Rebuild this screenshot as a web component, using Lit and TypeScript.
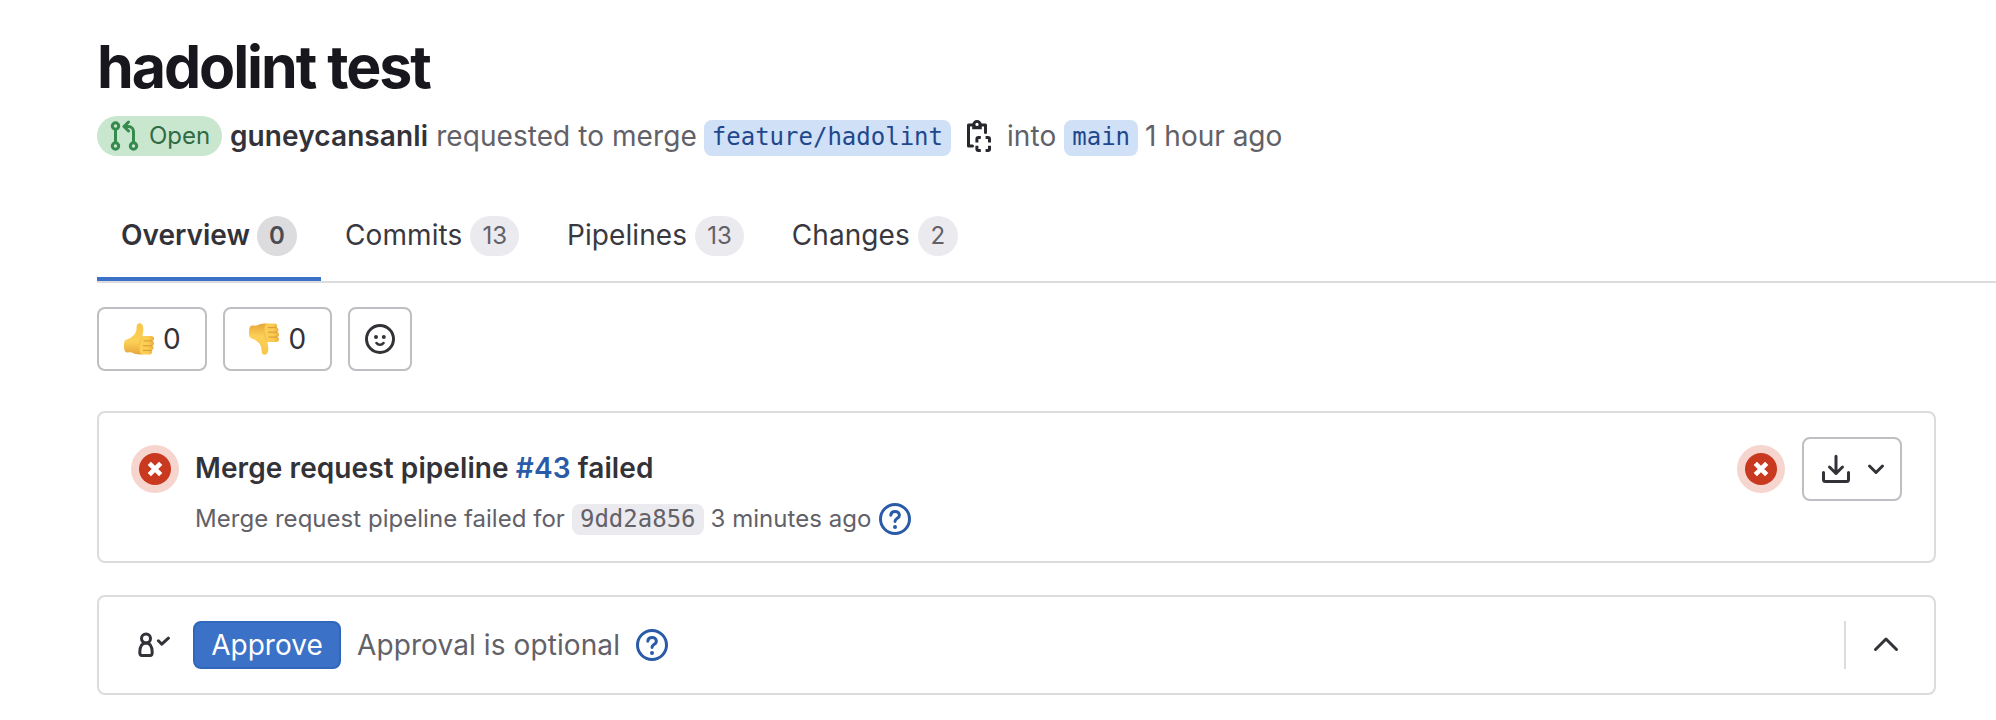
import { LitElement, html, css, svg } from "lit";
import { customElement, property } from "lit/decorators.js";

const thumb = svg`
  <path d="M.4 18.500C1 16.700 4.500 16.300 7.300 14.300 10.500 12 12 9.800 12.500 6.200 12.700 3.300 12.600.3 15.200.2c3-.1 4.200 2.800 4.100 6.200-.1 2.500-.7 4.600-.8 6.600l5 4-1 13.500c-3.500 1.200-8.500 1.100-12 .3-1.500-.4-2.500-1.500-4-1.500-2 0-4 .6-5.300-.8C-.2 26.500-.3 21.500.4 18.500z" fill="url(#skin)"/>
  <path d="M19 12.900h8c3.800 0 3.800 4.200 1.300 5 2.500.6 2.300 4.300 0 4.900 1.900.8 1.500 4.100-.7 4.600 1.300 1.300.4 4-1.900 4h-6.500c-2.400 0-3.700-2-3.700-4.800 0-4.500.8-10 3.500-13.700z" fill="url(#fist)"/>
  <path d="M20 17.900h8M19.300 22.800h8.500M19.300 27.400h7.700" stroke="#d29434" stroke-width=".9" fill="none" stroke-linecap="round"/>
  <path d="M17.800 14.700c-1.300 1.700-2.100 4.200-2.300 7.500" stroke="#efb344" stroke-width=".7" fill="none"/>`;

const icons: Record<string, unknown> = {
  merge: svg`<g fill="none" stroke="currentColor" stroke-width="1.500"><circle cx="3.250" cy="3" r="1.600"/><circle cx="3.250" cy="13" r="1.600"/><circle cx="12.250" cy="13" r="1.600"/><path d="M3.250 4.500v7M12.250 11.500V5.750a2.500 2.500 0 0 0-2.500-2.500H8"/><path d="M9.750 1 7.500 3.250l2.250 2.250" stroke-linecap="round" stroke-linejoin="round"/></g>`,
  copy: svg`<g fill="none" stroke="currentColor" stroke-width="1.500"><path d="M4.750 13H2.750V2.500h8.500v3.700" stroke-linecap="round" stroke-linejoin="round"/><path d="M6.950 11.200V9.500q0-.75.75-.75h1.200M11.300 8.750h1.200q.75 0 .75.75v1.700M13.250 12.900v1.600q0 .75-.75.75h-1.200M8.900 15.250H7.700q-.75 0-.75-.75v-1.600"/></g><path d="M4.600 4.600V2.400a2.400 2.400 0 0 1 4.800 0v2.200z" fill="currentColor"/><circle cx="7" cy="2.200" r=".8" fill="#fff"/>`,
  smile: svg`<circle cx="8" cy="8" r="6.750" fill="none" stroke="currentColor" stroke-width="1.500"/><circle cx="6" cy="7" r="1" fill="currentColor"/><circle cx="9.900" cy="7" r="1" fill="currentColor"/><path d="M6.250 10c.9 1.200 2.600 1.200 3.500 0" fill="none" stroke="currentColor" stroke-width="1.300" stroke-linecap="round"/>`,
  download: svg`<path d="M8 1.600v8.700M4.750 7 8 10.250 11.250 7M1.750 9.750v3.500q0 1 1 1h10.500q1 0 1-1v-3.500" fill="none" stroke="currentColor" stroke-width="1.500" stroke-linecap="round" stroke-linejoin="round"/>`,
  down: svg`<path d="M4.750 6.500 8 9.750 11.250 6.500" fill="none" stroke="currentColor" stroke-width="1.500" stroke-linecap="round" stroke-linejoin="round"/>`,
  up: svg`<path d="M2.750 10.250 8 5l5.250 5.250" fill="none" stroke="currentColor" stroke-width="1.500" stroke-linecap="round" stroke-linejoin="round"/>`,
  help: svg`<circle cx="8" cy="8" r="7.250" fill="none" stroke="currentColor" stroke-width="1.500"/><path d="M5.900 6.100c.2-2.500 4.300-2.400 4.300 0 0 1.600-2.100 1.500-2.200 3.100" fill="none" stroke="currentColor" stroke-width="1.500" stroke-linecap="round"/><circle cx="8" cy="12" r="1" fill="currentColor"/>`,
  approval: svg`<g fill="none" stroke="currentColor" stroke-width="1.500"><circle cx="4" cy="4.750" r="2.250"/><path d="M.9 11.800C.9 8.800 2 7 4 7s3.100 1.800 3.100 4.800q0 1.450-1 1.450H1.900q-1 0-1-1.450z"/><path d="m10.200 5.900 1.700 1.700 3.300-3" stroke-linecap="round" stroke-linejoin="round"/></g>`,
  cross: svg`<circle cx="8" cy="8" r="8" fill="#c9391f"/><path d="m5.150 5.150 5.700 5.700M10.850 5.150l-5.700 5.700" stroke="#fff" stroke-width="2.300"/>`,
};

@customElement("gl-icon")
class GlIcon extends LitElement {
  @property() name = "";
  @property({ type: Number }) size = 32;
  static styles = css`
    :host { display: inline-flex; flex: none; }
    svg { display: block; }
  `;
  render() {
    return html`<svg width=${this.size} height=${this.size} viewBox="0 0 16 16">${icons[this.name]}</svg>`;
  }
}

@customElement("app-root")
class AppRoot extends LitElement {
  static styles = css`
    :host { display: block; width: 1996px; height: 720px; overflow: hidden; background: #fff; color: #333238; font: 28px/40px Inter, "Liberation Sans", sans-serif; }
    * { box-sizing: border-box; }
    .page { padding: 35px 0 0 97px; }
    h1 { margin: 0; font-size: 59px; line-height: 64px; font-weight: 650; letter-spacing: -2.050px; color: #18171d; white-space: nowrap; }
    .meta { display: flex; align-items: center; height: 40px; margin-top: 17px; color: #626168; white-space: nowrap; letter-spacing: .07px; }
    .meta b, .title { font-weight: 600; color: #333238; }
    .meta b { letter-spacing: .1px; }
    .open { display: flex; align-items: center; gap: 8px; width: 125px; height: 40px; border-radius: 20px; padding-left: 12px; margin-right: 8px; background: #c9e6ce; color: #2f6b45; font-size: 24px; letter-spacing: 0; }
    .open gl-icon { color: #358a4d; }
    .req { margin: 0 7px 0 8px; }
    .code { font-family: "DejaVu Sans Mono", monospace; font-size: 24px; letter-spacing: 0; }
    .branch { height: 36px; line-height: 35px; margin-top: 4px; border-radius: 8px; padding: 0 8px; background: #cfe0f7; color: #1f478c; }
    .copy { margin: 0 12px; color: #28272d; }
    .into { margin-right: 8px; }
    .ago { margin-left: 7px; letter-spacing: 0; }
    .tabs { display: flex; height: 91px; margin-top: 36px; padding-top: 1px; border-bottom: 2px solid #dcdcde; }
    .tab { display: flex; height: 88px; padding: 22px 24px 0; white-space: nowrap; color: #3a383f; letter-spacing: .09px; }
    .tab.active { width: 224px; border-bottom: 4px solid #3b71c6; font-weight: 600; color: #333238; letter-spacing: 0; }
    .badge { height: 40px; line-height: 39px; min-width: 40px; border-radius: 20px; padding: 0 12px; margin: 1px 0 0 8px; text-align: center; font-size: 24px; background: #ebeaef; color: #626168; letter-spacing: 0; }
    .active .badge { margin-left: 7px; background: #dcdcde; color: #4c4b51; }
    .awards { display: flex; gap: 16px; margin-top: 24px; }
    .award, .download { display: flex; align-items: center; justify-content: center; height: 64px; border: 2px solid #bfbfc3; border-radius: 8px; }
    .award { width: 109.500px; gap: 7px; padding-left: 1px; }
    .award.square { width: 64px; padding: 0; }
    .flip { transform: scaleY(-1); }
    .card { width: 1839px; border: 2px solid #dcdcde; border-radius: 8px; display: flex; }
    .pipeline { height: 152px; margin-top: 40px; padding: 24px 32px; }
    .status { display: flex; align-items: center; justify-content: center; width: 48px; height: 48px; border-radius: 50%; background: #f7d5cf; flex: none; }
    .status.left { margin: 8px 16px 0 0; }
    .text { flex: 1; padding-top: 11px; white-space: nowrap; }
    .title { line-height: 40px; letter-spacing: .09px; }
    .num { color: #2a5ba8; }
    .sub { display: flex; align-items: center; height: 32px; margin-top: 15px; font-size: 24px; letter-spacing: .03px; color: #626168; }
    .sha { height: 31px; line-height: 31px; margin: 0 7px; padding: 0 8px; border-radius: 8px; background: #ebeaef; }
    .help { color: #2a5ba8; }
    .sub .help { margin-left: 8px; }
    .status.right { margin: 8px 17px 0 0; }
    .download { width: 100px; gap: 8px; justify-content: flex-start; padding-left: 16px; }
    .approval { height: 100px; margin-top: 32px; align-items: center; padding: 0 32px 0 39px; }
    .approve { width: 148px; height: 48px; margin: 0 16px 0 23px; border-radius: 8px; background: #3b71c6; border: 2px solid #3067bb; color: #fff; text-align: center; line-height: 44px; }
    .optional { color: #626168; margin-right: 16px; letter-spacing: .1px; }
    .rule { width: 2px; height: 48px; background: #dcdcde; margin-left: auto; margin-right: 24px; }
  `;
  thumb(flip = false) {
    return html`<svg class=${flip ? "flip" : ""} width="32" height="32" viewBox="0 0 32 32">
      <defs>
        <linearGradient id="skin" x1="0" y1="0" x2="0" y2="1"><stop stop-color="#f8c648"/><stop offset=".6" stop-color="#fcd057"/><stop offset="1" stop-color="#e6a53a"/></linearGradient>
        <linearGradient id="fist" x1="0" y1="0" x2="1" y2="0"><stop stop-color="#fcd057"/><stop offset=".6" stop-color="#fbcb50"/><stop offset="1" stop-color="#e9ad3c"/></linearGradient>
      </defs>${thumb}</svg>`;
  }
  render() {
    const tabs = [["Overview", "0"], ["Commits", "13"], ["Pipelines", "13"], ["Changes", "2"]];
    const cross = html`<gl-icon name="cross"></gl-icon>`;
    return html`<div class="page">
      <h1>hadolint test</h1>
      <div class="meta">
        <span class="open"><gl-icon name="merge"></gl-icon>Open</span><b>guneycansanli</b><span class="req">requested to merge</span>
        <span class="code branch">feature/hadolint</span><gl-icon class="copy" name="copy"></gl-icon>
        <span class="into">into</span><span class="code branch">main</span><span class="ago">1 hour ago</span>
      </div>
      <div class="tabs">${tabs.map(([t, n], i) => html`<div class="tab ${i ? "" : "active"}"><span>${t}</span><span class="badge">${n}</span></div>`)}</div>
      <div class="awards">
        <div class="award">${this.thumb()}<span>0</span></div>
        <div class="award">${this.thumb(true)}<span>0</span></div>
        <div class="award square"><gl-icon name="smile"></gl-icon></div>
      </div>
      <div class="card pipeline">
        <div class="status left">${cross}</div>
        <div class="text"><div class="title">Merge request pipeline <span class="num">#43</span> failed</div>
          <div class="sub"><span>Merge request pipeline failed for</span><span class="code sha">9dd2a856</span><span>3 minutes ago</span><gl-icon class="help" name="help"></gl-icon></div></div>
        <div class="status right">${cross}</div>
        <div class="download"><gl-icon name="download"></gl-icon><gl-icon name="down"></gl-icon></div>
      </div>
      <div class="card approval">
        <gl-icon name="approval"></gl-icon><div class="approve">Approve</div><span class="optional">Approval is optional</span><gl-icon class="help" name="help"></gl-icon>
        <div class="rule"></div><gl-icon name="up"></gl-icon>
      </div>
    </div>`;
  }
}
